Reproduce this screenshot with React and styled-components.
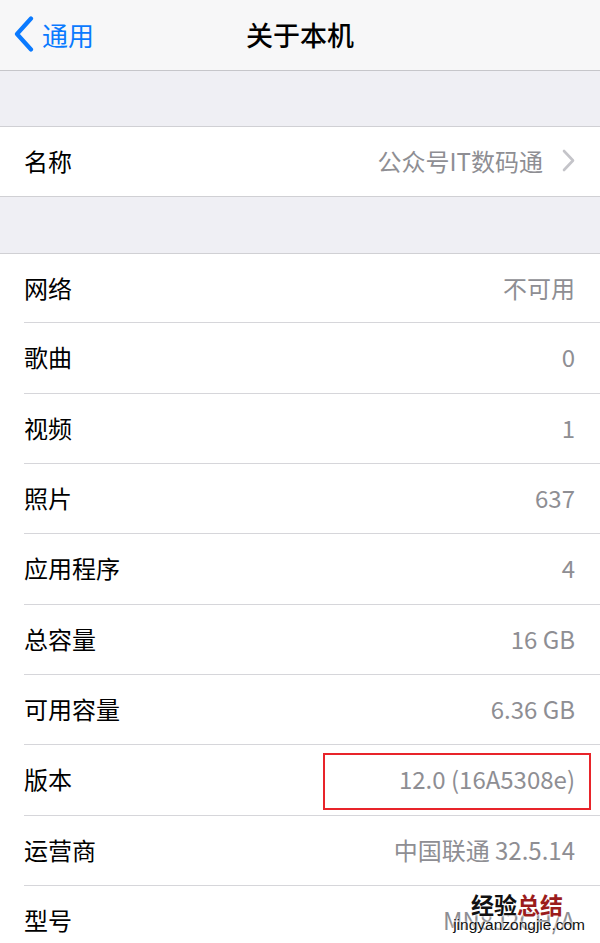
import styled, { createGlobalStyle } from "styled-components"

const GlobalStyle = createGlobalStyle`
  html, body {
    margin: 0;
    padding: 0;
    background: #efeff4;
  }
  body {
    font-family: "Noto Sans CJK SC", "Noto Sans", sans-serif;
    -webkit-font-smoothing: antialiased;
  }
`

const Page = styled.div`
  width: 600px;
  height: 943px;
  overflow: hidden;
  position: relative;
  background: #efeff4;
`

const NavBar = styled.div`
  height: 71px;
  box-sizing: border-box;
  padding-bottom: 2px;
  background: #f7f7f8;
  border-bottom: 1px solid #c6c6ca;
  display: flex;
  align-items: center;
  justify-content: center;
  position: relative;
`

const BackButton = styled.div`
  position: absolute;
  left: 14px;
  top: 0;
  bottom: 2px;
  display: flex;
  align-items: center;
  gap: 8px;
  color: #0a7aff;
  font-size: 26px;
`

const Title = styled.div`
  font-size: 27px;
  font-weight: 500;
  color: #000;
`

const Spacer = styled.div`
  height: ${(p) => p.$h}px;
`

const Group = styled.div`
  background: #fff;
  border-top: 1px solid #d0d0d4;
  border-bottom: 1px solid #d0d0d4;
`

const Row = styled.div`
  position: relative;
  height: ${(p) => p.$h || 70.33}px;
  box-sizing: border-box;
  display: flex;
  align-items: center;
  justify-content: space-between;
  padding: 0 25px 3px 24px;
  font-size: 24px;

  &:not(:last-child)::after {
    content: "";
    position: absolute;
    left: 24px;
    right: 0;
    bottom: 0;
    height: 1px;
    background: #d6d6da;
  }
`

const Label = styled.span`
  color: #000;
`

const Value = styled.span`
  color: #8e8e93;
  display: flex;
  align-items: center;
  gap: 19px;
`

const Highlight = styled.div`
  position: absolute;
  left: 323px;
  right: 9px;
  top: 8px;
  bottom: 6px;
  border: 2px solid #e8242a;
`

const Watermark = styled.div`
  position: absolute;
  right: 15px;
  bottom: 9px;
  display: flex;
  flex-direction: column;
  align-items: flex-end;
  text-shadow: 0 0 3px #fff, 0 0 3px #fff;
`

const MarkTitle = styled.div`
  font-size: 23px;
  font-weight: 700;
  line-height: 24px;
  margin-right: 22px;
  color: #111;
  span {
    color: #9b1c1c;
  }
`

const MarkSite = styled.div`
  font-family: "Liberation Sans", sans-serif;
  font-size: 15.5px;
  line-height: 18px;
  color: #111;
`

const Chevron = () => (
  <svg width="13" height="23" viewBox="0 0 13 23">
    <path d="M2 2 L11 11.5 L2 21" fill="none" stroke="#c4c4c9" strokeWidth="2.6" strokeLinecap="round" strokeLinejoin="round" />
  </svg>
)

const BackChevron = () => (
  <svg width="20" height="36" viewBox="0 0 20 36">
    <path d="M17 2.5 L3 18 L17 33.5" fill="none" stroke="#0a7aff" strokeWidth="4.2" strokeLinecap="round" strokeLinejoin="round" />
  </svg>
)

const rows = [
  ["网络", "不可用"],
  ["歌曲", "0"],
  ["视频", "1"],
  ["照片", "637"],
  ["应用程序", "4"],
  ["总容量", "16 GB"],
  ["可用容量", "6.36 GB"],
  ["版本", "12.0 (16A5308e)"],
  ["运营商", "中国联通 32.5.14"],
  ["型号", "MN8J2CH/A"],
]

const App = () => (
  <Page>
    <GlobalStyle />
    <NavBar>
      <BackButton>
        <BackChevron />
        <span>通用</span>
      </BackButton>
      <Title>关于本机</Title>
    </NavBar>
    <Spacer $h={55} />
    <Group>
      <Row $h={69}>
        <Label>名称</Label>
        <Value>
          公众号IT数码通
          <Chevron />
        </Value>
      </Row>
    </Group>
    <Spacer $h={56} />
    <Group>
      {rows.map(([label, value], i) => (
        <Row key={label} $h={i === 0 ? 69.33 : 70.33}>
          <Label>{label}</Label>
          <Value>{value}</Value>
          {label === "版本" && <Highlight />}
        </Row>
      ))}
    </Group>
    <Watermark>
      <MarkTitle>
        经验<span>总结</span>
      </MarkTitle>
      <MarkSite>jingyanzongjie.com</MarkSite>
    </Watermark>
  </Page>
)

export default App
